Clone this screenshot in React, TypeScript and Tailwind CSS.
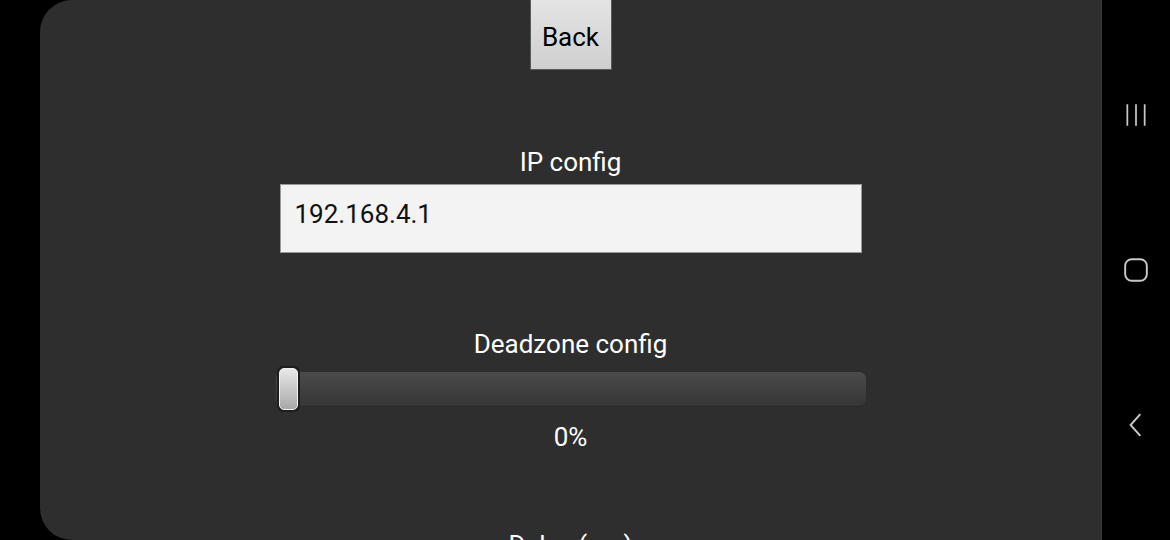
export default function App() {
  return (
    <div className="w-[1170px] h-[540px] bg-black flex overflow-hidden" style={{ fontFamily: 'Roboto, "Liberation Sans", sans-serif' }}>
      <div className="ml-[40px] w-[1062px] h-full bg-[#2e2e2e] rounded-l-[32px] flex flex-col items-center overflow-hidden border-r border-[#3a3a3a]">
        <button className="w-[82px] h-[71px] mt-[-1px] bg-gradient-to-b from-[#e4e4e4] to-[#cfcfcf] border border-[#5a5a5a] text-black text-[26px] leading-[30px] pt-[4px] shrink-0">Back</button>
        <div className="mt-[77px] h-[30px] leading-[30px] text-white text-[26px]">IP config</div>
        <div className="mt-[7px] w-[582px] h-[69px] bg-[#f3f3f3] border border-[#9a9a9a] flex items-center px-[14px] shrink-0">
          <span className="text-[26px] text-[#111] mt-[-8px]">192.168.4.1</span>
        </div>
        <div className="mt-[76px] h-[30px] leading-[30px] text-white text-[26px]">Deadzone config</div>
        <div className="mt-[7px] w-[590px] h-[46px] relative shrink-0 flex items-center">
          <div className="w-full h-[35px] rounded-[7px] bg-gradient-to-b from-[#4b4b4b] via-[#404040] to-[#363636] border-b border-[#2a2a2a]"></div>
          <div className="absolute left-[1px] top-0 w-[23px] h-[46px] rounded-[6px] bg-[#1e1e1e] p-[2px]">
            <div className="w-full h-full rounded-[5px] bg-gradient-to-b from-[#e8e8e8] via-[#c8c8c8] to-[#a8a8a8] border border-[#f0f0f0]"></div>
          </div>
        </div>
        <div className="mt-[10px] h-[30px] leading-[30px] text-white text-[26px]">0%</div>
        <div className="mt-[78px] h-[30px] leading-[30px] text-white text-[26px] shrink-0">Delay (ms)</div>
      </div>
      <div className="flex-1 h-full flex flex-col items-center justify-between py-[102px]">
        <svg width="26" height="26" viewBox="0 0 24 24" fill="none" stroke="#c8c8c8" strokeWidth="1.6">
          <path d="M4 2v20M12 2v20M20 2v20" />
        </svg>
        <svg width="26" height="26" viewBox="0 0 24 24" fill="none" stroke="#c8c8c8" strokeWidth="1.8">
          <rect x="2" y="2" width="20" height="20" rx="6" />
        </svg>
        <svg width="26" height="26" viewBox="0 0 24 24" fill="none" stroke="#c8c8c8" strokeWidth="1.8">
          <path d="M16 2L7 12l9 10" />
        </svg>
      </div>
    </div>
  )
}
